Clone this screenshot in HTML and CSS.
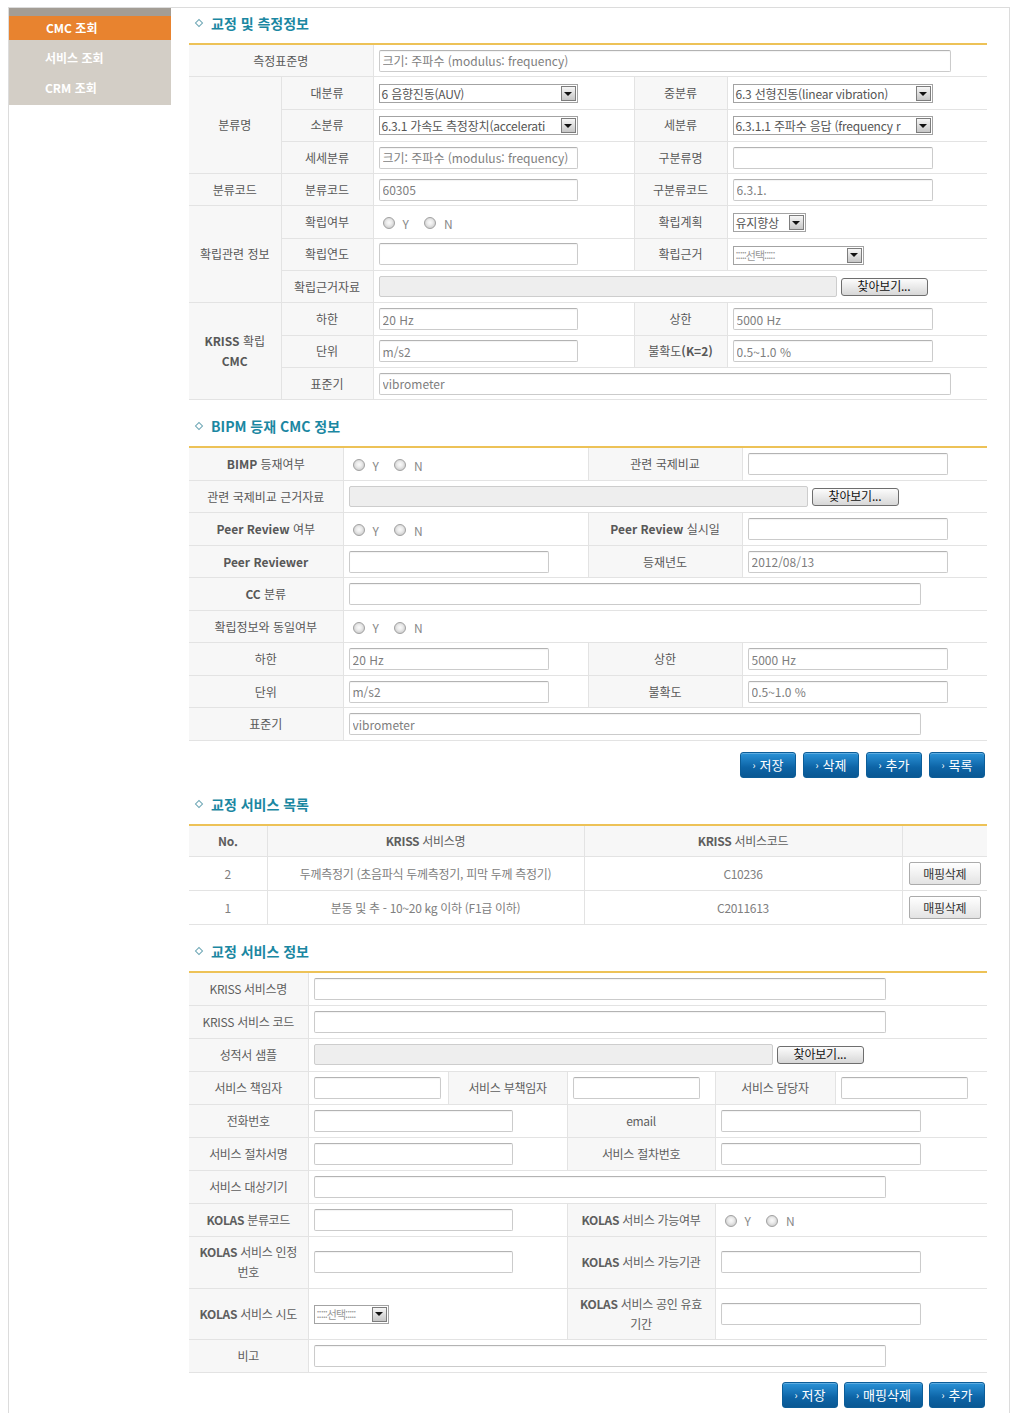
FILE: index.html
```html
<!DOCTYPE html>
<html lang="ko">
<head>
<meta charset="utf-8">
<title>CMC 조회</title>
<link rel="stylesheet" href="styles.css">
</head>
<body>
<div class="frame">
  <div class="side">
    <div class="side-top"></div>
    <div class="side-cur">CMC 조회</div>
    <div class="side-rest">
      <div class="side-item">서비스 조회</div>
      <div class="side-item">CRM 조회</div>
    </div>
  </div>

  <div class="main">
    <div class="sec-title first"><span class="bul"></span>교정 및 측정정보</div>
    <div class="tbl-wrap">
      <table class="form t1">
        <colgroup><col style="width:92px"><col style="width:92px"><col style="width:261px"><col style="width:93px"><col style="width:260px"></colgroup>
        <tr><th colspan="2">측정표준명</th><td colspan="3"><input class="in w572" value="크기: 주파수 (modulus: frequency)"></td></tr>
        <tr><th rowspan="3">분류명</th><th>대분류</th>
          <td><span class="sel w199"><span class="sel-t">6 음향진동(AUV)</span><span class="sel-a"></span></span></td>
          <th>중분류</th>
          <td><span class="sel w200"><span class="sel-t">6.3 선형진동(linear vibration)</span><span class="sel-a"></span></span></td></tr>
        <tr><th>소분류</th>
          <td><span class="sel w199"><span class="sel-t">6.3.1 가속도 측정장치(accelerati</span><span class="sel-a"></span></span></td>
          <th>세분류</th>
          <td><span class="sel w200"><span class="sel-t">6.3.1.1 주파수 응답 (frequency r</span><span class="sel-a"></span></span></td></tr>
        <tr><th>세세분류</th><td><input class="in w199" value="크기: 주파수 (modulus: frequency)"></td><th>구분류명</th><td><input class="in w200" value=""></td></tr>
        <tr><th>분류코드</th><th>분류코드</th><td><input class="in w199" value="60305"></td><th>구분류코드</th><td><input class="in w200" value="6.3.1."></td></tr>
        <tr><th rowspan="3">확립관련 정보</th><th>확립여부</th>
          <td><span class="radios"><span class="r"></span><span class="rl">Y</span><span class="r"></span><span class="rl">N</span></span></td>
          <th>확립계획</th>
          <td><span class="sel w72"><span class="sel-t">유지향상</span><span class="sel-a"></span></span></td></tr>
        <tr><th>확립연도</th><td><input class="in w199" value=""></td><th>확립근거</th>
          <td><span class="sel w131"><span class="sel-t dots">:::::선택:::::</span><span class="sel-a"></span></span></td></tr>
        <tr><th>확립근거자료</th><td colspan="3"><span class="file"><span class="file-box w458"></span><span class="file-btn">찾아보기...</span></span></td></tr>
        <tr><th rowspan="3"><b>KRISS</b> 확립<br><b>CMC</b></th><th>하한</th><td><input class="in w199" value="20 Hz"></td><th>상한</th><td><input class="in w200" value="5000 Hz"></td></tr>
        <tr><th>단위</th><td><input class="in w199" value="m/s2"></td><th>불확도<b>(K=2)</b></th><td><input class="in w200" value="0.5~1.0 %"></td></tr>
        <tr><th>표준기</th><td colspan="3"><input class="in w572" value="vibrometer"></td></tr>
      </table>
    </div>

    <div class="sec-title"><span class="bul"></span>BIPM 등재 CMC 정보</div>
    <div class="tbl-wrap">
      <table class="form t2">
        <colgroup><col style="width:154px"><col style="width:245px"><col style="width:154px"><col style="width:245px"></colgroup>
        <tr><th><b>BIMP</b> 등재여부</th>
          <td><span class="radios"><span class="r"></span><span class="rl">Y</span><span class="r"></span><span class="rl">N</span></span></td>
          <th>관련 국제비교</th><td><input class="in w200" value=""></td></tr>
        <tr><th>관련 국제비교 근거자료</th><td colspan="3"><span class="file"><span class="file-box w459"></span><span class="file-btn">찾아보기...</span></span></td></tr>
        <tr><th><b>Peer Review</b> 여부</th>
          <td><span class="radios"><span class="r"></span><span class="rl">Y</span><span class="r"></span><span class="rl">N</span></span></td>
          <th><b>Peer Review</b> 실시일</th><td><input class="in w200" value=""></td></tr>
        <tr><th><b>Peer Reviewer</b></th><td><input class="in w200" value=""></td><th>등재년도</th><td><input class="in w200" value="2012/08/13"></td></tr>
        <tr><th><b>CC</b> 분류</th><td colspan="3"><input class="in w572" value=""></td></tr>
        <tr><th>확립정보와 동일여부</th><td colspan="3"><span class="radios"><span class="r"></span><span class="rl">Y</span><span class="r"></span><span class="rl">N</span></span></td></tr>
        <tr><th>하한</th><td><input class="in w200" value="20 Hz"></td><th>상한</th><td><input class="in w200" value="5000 Hz"></td></tr>
        <tr><th>단위</th><td><input class="in w200" value="m/s2"></td><th>불확도</th><td><input class="in w200" value="0.5~1.0 %"></td></tr>
        <tr><th>표준기</th><td colspan="3"><input class="in w572" value="vibrometer"></td></tr>
      </table>
    </div>
    <div class="btns">
      <a class="bbtn"><span class="chev">›</span>저장</a>
      <a class="bbtn"><span class="chev">›</span>삭제</a>
      <a class="bbtn"><span class="chev">›</span>추가</a>
      <a class="bbtn"><span class="chev">›</span>목록</a>
    </div>

    <div class="sec-title"><span class="bul"></span>교정 서비스 목록</div>
    <div class="tbl-wrap">
      <table class="form list">
        <colgroup><col style="width:78px"><col style="width:317px"><col style="width:318px"><col style="width:85px"></colgroup>
        <tr class="head"><th><b>No.</b></th><th><b>KRISS</b> 서비스명</th><th><b>KRISS</b> 서비스코드</th><th></th></tr>
        <tr><td>2</td><td>두께측정기 (초음파식 두께측정기, 피막 두께 측정기)</td><td>C10236</td><td><span class="gbtn">매핑삭제</span></td></tr>
        <tr><td>1</td><td>분동 및 추 - 10~20 kg 이하 (F1급 이하)</td><td>C2011613</td><td><span class="gbtn">매핑삭제</span></td></tr>
      </table>
    </div>

    <div class="sec-title"><span class="bul"></span>교정 서비스 정보</div>
    <div class="tbl-wrap">
      <table class="form t4">
        <colgroup><col style="width:119px"><col style="width:140px"><col style="width:119px"><col style="width:148px"><col style="width:120px"><col style="width:152px"></colgroup>
        <tr><th>KRISS 서비스명</th><td colspan="5"><input class="in w572" value=""></td></tr>
        <tr><th>KRISS 서비스 코드</th><td colspan="5"><input class="in w572" value=""></td></tr>
        <tr><th>성적서 샘플</th><td colspan="5"><span class="file"><span class="file-box w459"></span><span class="file-btn">찾아보기...</span></span></td></tr>
        <tr><th>서비스 책임자</th><td><input class="in w127" value=""></td><th>서비스 부책임자</th><td><input class="in w127" value=""></td><th>서비스 담당자</th><td><input class="in w127" value=""></td></tr>
        <tr><th>전화번호</th><td colspan="2"><input class="in w199" value=""></td><th>email</th><td colspan="2"><input class="in w200" value=""></td></tr>
        <tr><th>서비스 절차서명</th><td colspan="2"><input class="in w199" value=""></td><th>서비스 절차번호</th><td colspan="2"><input class="in w200" value=""></td></tr>
        <tr><th>서비스 대상기기</th><td colspan="5"><input class="in w572" value=""></td></tr>
        <tr><th><b>KOLAS</b> 분류코드</th><td colspan="2"><input class="in w199" value=""></td><th><b>KOLAS</b> 서비스 가능여부</th>
          <td colspan="2"><span class="radios"><span class="r"></span><span class="rl">Y</span><span class="r"></span><span class="rl">N</span></span></td></tr>
        <tr class="tall"><th><b>KOLAS</b> 서비스 인정<br>번호</th><td colspan="2"><input class="in w199" value=""></td><th><b>KOLAS</b> 서비스 가능기관</th><td colspan="2"><input class="in w200" value=""></td></tr>
        <tr class="tall2"><th><b>KOLAS</b> 서비스 시도</th>
          <td colspan="2"><span class="sel w75"><span class="sel-t dots">:::::선택:::::</span><span class="sel-a"></span></span></td>
          <th><b>KOLAS</b> 서비스 공인 유효<br>기간</th><td colspan="2"><input class="in w200" value=""></td></tr>
        <tr><th>비고</th><td colspan="5"><input class="in w572" value=""></td></tr>
      </table>
    </div>
    <div class="btns last">
      <a class="bbtn"><span class="chev">›</span>저장</a>
      <a class="bbtn wide"><span class="chev">›</span>매핑삭제</a>
      <a class="bbtn"><span class="chev">›</span>추가</a>
    </div>
  </div>
</div>
</body>
</html>
```

FILE: styles.css
```css
html, body {
  margin: 0;
  padding: 0;
  background: #fff;
}
body {
  font-family: "Noto Sans CJK KR", "Noto Sans", sans-serif;
  font-size: 12px;
  color: #666;
}
.frame {
  display: flex;
  align-items: flex-start;
  margin: 7px 0 0 8px;
  width: 1000px;
  min-height: 1440px;
  border: 1px solid #dcdcdc;
  border-bottom: none;
}

/* sidebar */
.side {
  width: 162px;
  flex: none;
}
.side-top {
  height: 8px;
  background: #a39d95;
}
.side-cur {
  height: 24px;
  line-height: 24px;
  background: #e8832f;
  color: #fff;
  font-weight: bold;
  padding-left: 37px;
}
.side-rest {
  background: #d3cec6;
  padding: 3px 0 2px;
}
.side-item {
  height: 30px;
  line-height: 30px;
  color: #fff;
  font-weight: bold;
  padding-left: 36px;
}

/* main */
.main {
  width: 798px;
  margin-left: 18px;
  flex: none;
}
.sec-title {
  display: flex;
  align-items: center;
  padding: 15px 0 9px 6px;
  height: 22px;
  line-height: 22px;
  font-size: 14px;
  font-weight: bold;
  color: #1b87a2;
}
.sec-title.first {
  padding-top: 4px;
}
.bul {
  width: 4px;
  height: 4px;
  border: 1px solid #6fa8b6;
  transform: rotate(45deg);
  margin: 0 9px 0 1px;
}
.tbl-wrap {
  border-top: 2px solid #edc257;
}

table.form {
  width: 798px;
  table-layout: fixed;
  border-collapse: collapse;
  border-style: hidden hidden solid hidden;
  border-bottom: 1px solid #e3e3e3;
}
.form th {
  background: #f7f7f7;
  color: #585858;
  font-weight: normal;
  text-align: center;
  border: 1px solid #e3e3e3;
  padding: 0 3px;
  line-height: 20px;
  white-space: nowrap;
}
.form th b {
  font-weight: bold;
}
.form td {
  border: 1px solid #e3e3e3;
  padding: 0 5px;
  text-align: left;
  white-space: nowrap;
}
.t1 th, .t1 td { height: 31.3px; }
.t2 th, .t2 td { height: 31.5px; }
.t4 th, .t4 td { height: 32px; }
.t4 tr.tall th, .t4 tr.tall td { height: 51px; }
.t4 tr.tall2 th, .t4 tr.tall2 td { height: 50px; }
.t4 th { color: #5e5e5e; letter-spacing: -0.3px; }

/* list table */
.list th, .list td {
  text-align: center;
  height: 33px;
  color: #808080;
  letter-spacing: -0.3px;
}
.list tr.head th {
  height: 30px;
  color: #5e5e5e;
}
.list td:last-child {
  padding: 0 6px;
}

/* inputs */
.in {
  box-sizing: border-box;
  height: 22px;
  border: 1px solid #cbcbcb;
  border-top-color: #b3b3b3;
  border-radius: 2px;
  box-shadow: inset 0 1px 1px rgba(0,0,0,0.05);
  padding: 0 3px;
  font-family: "Noto Sans CJK KR", "Noto Sans", sans-serif;
  font-size: 12px;
  color: #7e7e7e;
  vertical-align: middle;
  background: #fff;
  outline: none;
}
.w572 { width: 572px; }
.w199 { width: 199px; }
.w200 { width: 200px; }
.w127 { width: 127px; }
.w72 { width: 73px; }
.w75 { width: 75px; }
.w131 { width: 131px; }
.w458 { width: 458px; }
.w459 { width: 459px; }

/* select */
.sel {
  box-sizing: border-box;
  display: inline-flex;
  align-items: center;
  height: 19px;
  border: 1px solid #a3a3a3;
  background: #fff;
  vertical-align: middle;
  overflow: hidden;
}
.sel-t {
  flex: 1;
  min-width: 0;
  overflow: hidden;
  white-space: nowrap;
  padding-left: 2px;
  color: #555;
  font-size: 12px;
  line-height: 17px;
  letter-spacing: -0.2px;
}
.sel-t.dots {
  color: #999;
  letter-spacing: -1px;
  font-size: 11px;
}
.sel-a {
  flex: none;
  box-sizing: border-box;
  width: 15px;
  height: 15px;
  margin-right: 1px;
  border: 1px solid #7d7d7d;
  background: linear-gradient(#f6f6f6, #c6c6c6);
  display: flex;
  align-items: center;
  justify-content: center;
}
.sel-a::after {
  content: "";
  border-left: 4px solid transparent;
  border-right: 4px solid transparent;
  border-top: 4px solid #111;
}

/* file */
.file {
  display: inline-flex;
  align-items: center;
  vertical-align: middle;
}
.file-box {
  box-sizing: border-box;
  height: 21px;
  background: #eee;
  border: 1px solid #cdcdcd;
  border-radius: 2px;
}
.file-btn {
  box-sizing: border-box;
  margin-left: 4px;
  width: 87px;
  height: 18px;
  border: 1px solid #6e6e6e;
  border-radius: 3px;
  background: linear-gradient(#fcfcfc, #d7d7d7);
  color: #111;
  font-size: 12px;
  line-height: 14px;
  text-align: center;
  letter-spacing: -0.2px;
}

/* radios */
.radios {
  display: inline-flex;
  align-items: center;
  vertical-align: middle;
  padding-left: 4px;
}
.r {
  box-sizing: border-box;
  width: 12px;
  height: 12px;
  border: 1px solid #a2a2a2;
  border-radius: 50%;
  background: radial-gradient(circle at 50% 45%, #fafafa 0, #ececec 35%, #cfcfcf 75%);
}
.rl {
  color: #888;
  font-size: 12px;
  margin: 0 15px 0 8px;
}

/* blue buttons */
.btns {
  display: flex;
  justify-content: flex-end;
  gap: 7px;
  margin-top: 11px;
  padding-right: 2px;
}
.btns.last {
  margin-top: 9px;
  gap: 6px;
}
.bbtn {
  box-sizing: border-box;
  display: flex;
  align-items: center;
  justify-content: center;
  width: 56px;
  height: 26px;
  border-radius: 3px;
  border: 1px solid #0c5d98;
  background: linear-gradient(#2b93d8, #0d64a6 60%, #0a5893);
  color: #fff;
  font-size: 13px;
  box-shadow: inset 0 1px 0 rgba(255,255,255,0.25);
}
.bbtn.wide { width: 79px; }
.chev {
  font-size: 10px;
  margin-right: 4px;
}

/* grey button */
.gbtn {
  box-sizing: border-box;
  display: inline-block;
  width: 72px;
  height: 23px;
  line-height: 21px;
  border: 1px solid #ababab;
  border-radius: 2px;
  background: linear-gradient(#ffffff, #e3e3e3);
  color: #333;
  font-size: 12px;
  text-align: center;
  vertical-align: middle;
}
```
